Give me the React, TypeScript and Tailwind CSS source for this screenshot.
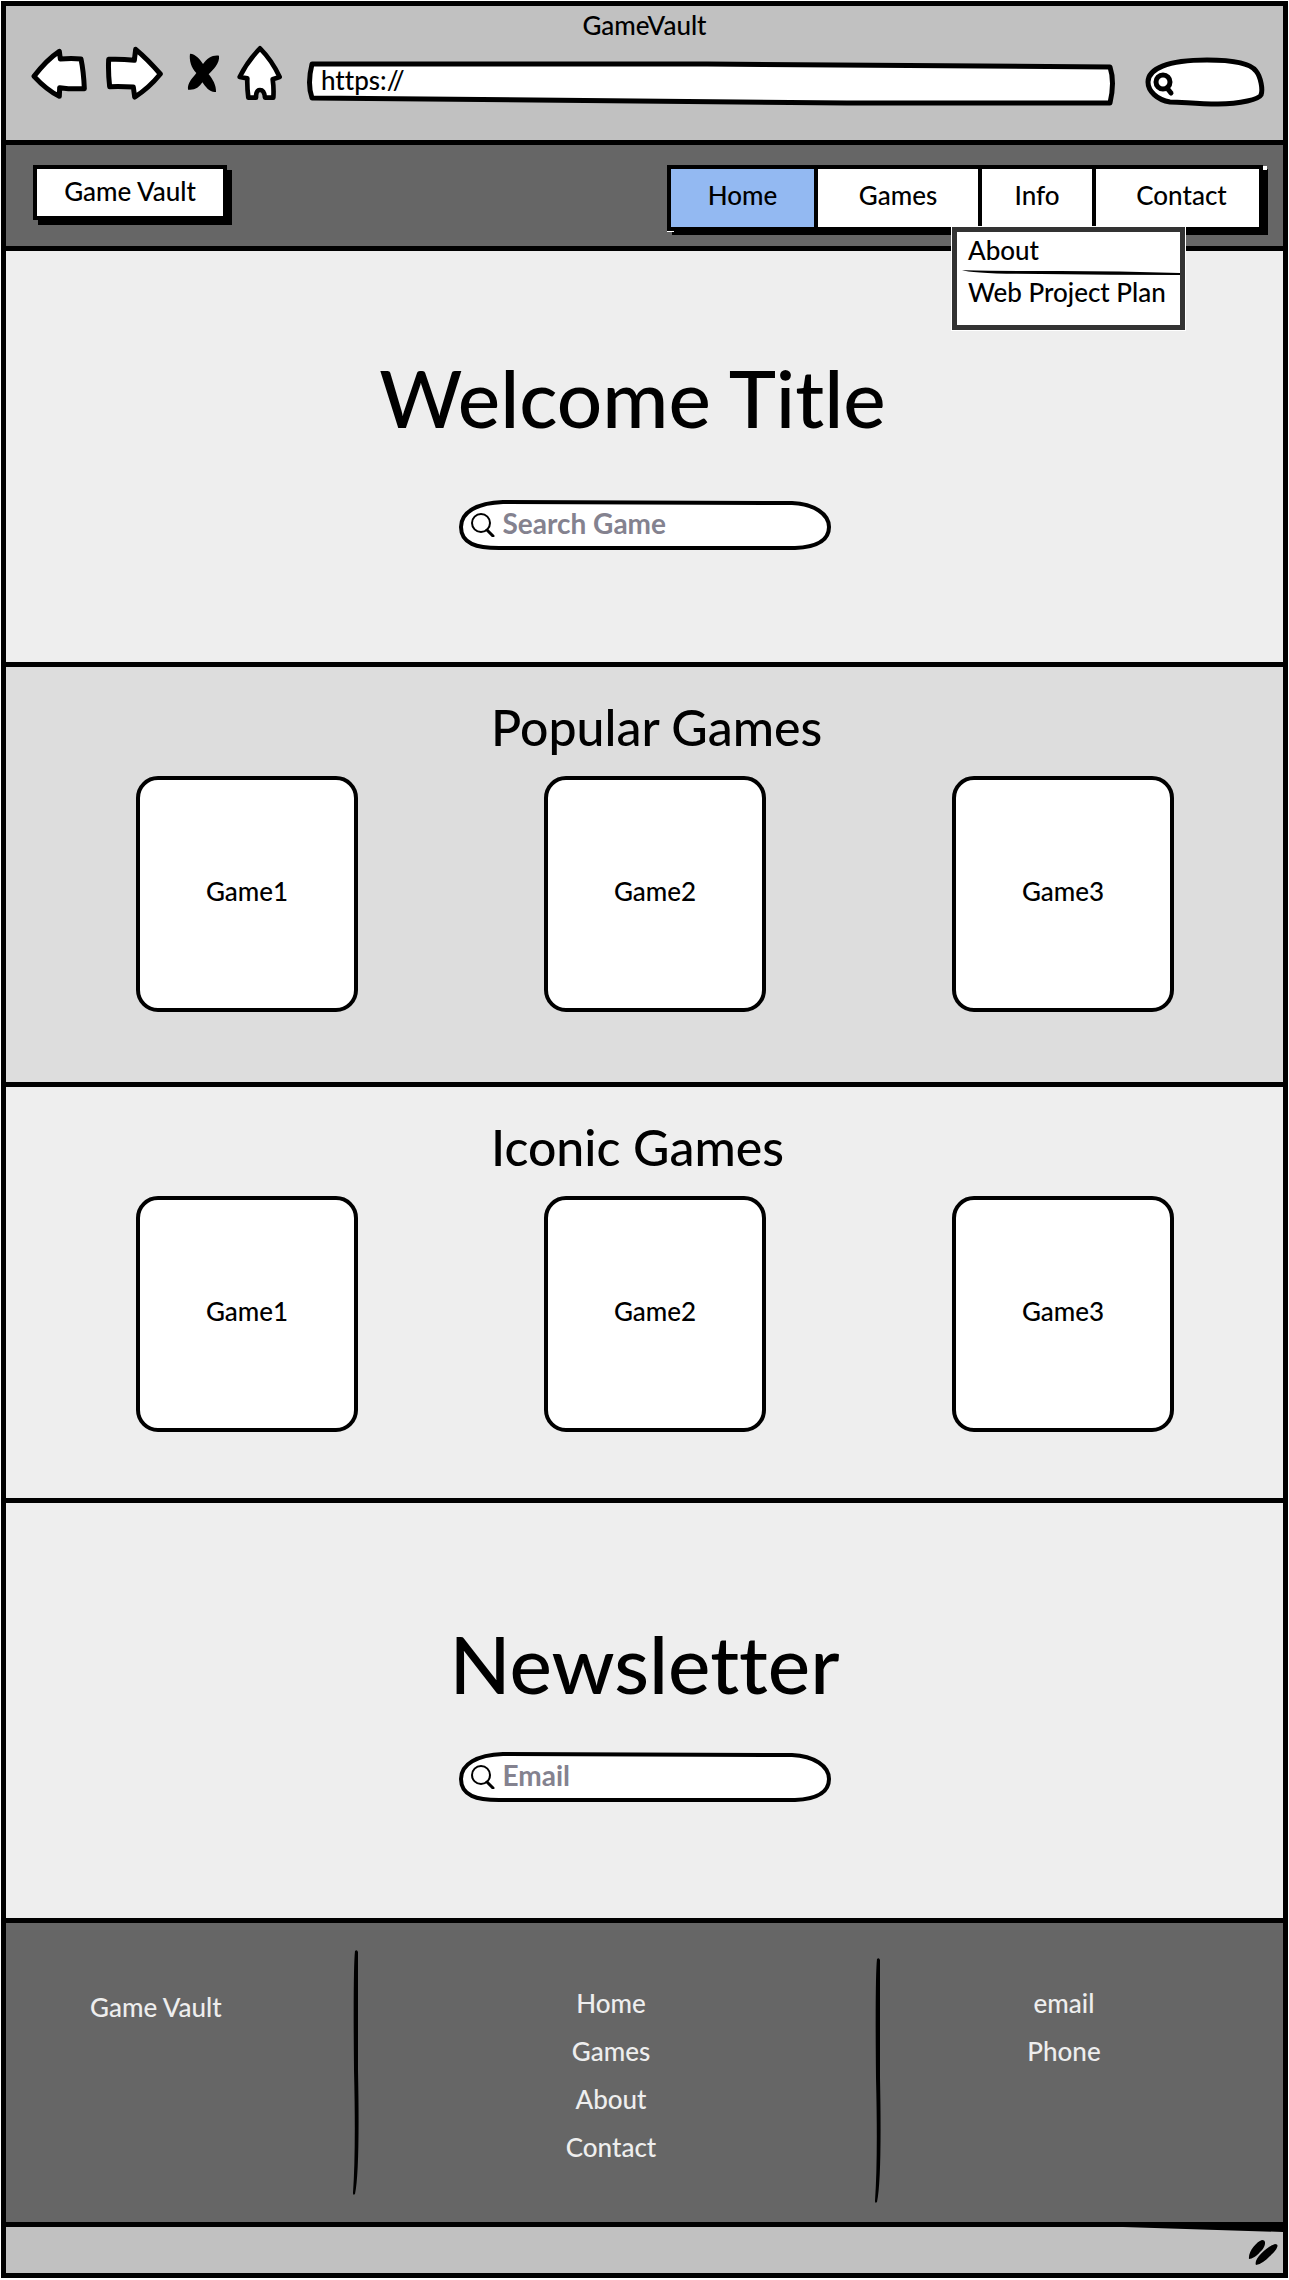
import React from "react";

const ink = {
  stroke: "#000",
  strokeLinecap: "round" as const,
  strokeLinejoin: "round" as const,
};

function BackIcon() {
  return (
    <svg viewBox="93 138 171 159" className="h-[53px] w-[57px]" aria-hidden="true">
      <path d="M102 226 Q140 176 178 151 L181 174 Q215 171 243 174 Q251 212 253 263 Q215 265 179 260 L178 286 Q140 267 102 226Z" fill="#fff" strokeWidth="15" {...ink} />
    </svg>
  );
}

function ForwardIcon() {
  return (
    <svg viewBox="315 141 177 162" className="h-[54px] w-[59px]" aria-hidden="true">
      <path d="M326 181 Q360 179 403 184 L407 151 Q442 180 481 225 Q445 269 404 294 L400 264 Q366 262 329 263 Q324 220 326 181Z" fill="#fff" strokeWidth="15" {...ink} />
    </svg>
  );
}

function StopIcon() {
  return (
    <svg viewBox="561 153 102 120" className="h-[40px] w-[34px]" aria-hidden="true">
      <path d="M570 155 C587 156 600 172 609 186 C621 169 638 158 657 161 C660 184 639 203 626 217 C638 231 649 250 648 270 C630 273 616 254 607 241 C598 256 583 266 564 263 C561 242 580 226 589 213 C574 197 567 175 570 155Z" fill="#000" />
    </svg>
  );
}

function HomeIcon() {
  return (
    <svg viewBox="711 135 138 168" className="h-[56px] w-[46px]" aria-hidden="true">
      <path d="M780 145 Q816 181 839 231 L818 238 Q822 265 820 293 L795 293 Q793 270 780 270 Q768 270 768 293 L745 293 Q741 262 742 235 L719 231 Q742 184 780 145Z" fill="#fff" strokeWidth="14" {...ink} />
    </svg>
  );
}

function ResizeGrip() {
  return (
    <svg viewBox="0 0 30 27" className="h-[27px] w-[30px]" aria-hidden="true">
      <path d="M1 20 C0 13 8 3 14 1 C20 1 16 10 12 13 C9 17 4 20 1 20Z M8 26 C5 20 20 7 27 5 C33 5 27 13 22 17 C17 22 13 25 8 26Z" fill="#000" />
    </svg>
  );
}

function PillField({ label, type }: { label: string; type: string }) {
  return (
    <label className="relative flex h-[50px] w-[372px] items-center pb-px pl-3">
      <svg viewBox="0 0 372 50" preserveAspectRatio="none" className="absolute inset-0 h-full w-full" aria-hidden="true">
        <path d="M2 27 C2 12 18 3 44 2 L333 3 C355 4 370 14 370 27 C370 40 358 47 336 48 L40 48 C18 48 2 44 2 27Z" fill="#fff" strokeWidth="4" {...ink} />
      </svg>
      <svg viewBox="0 0 24 24" className="relative h-6 w-6 shrink-0" fill="none" aria-hidden="true">
        <circle cx="10" cy="10" r="9" strokeWidth="2" {...ink} />
        <path d="M16 17 L22 23" strokeWidth="3" {...ink} />
      </svg>
      <input
        type={type}
        aria-label={label}
        placeholder={label}
        className="relative mr-4 ml-2 h-9 min-w-0 flex-1 bg-transparent pb-1 text-[28px] leading-8 font-bold outline-none placeholder:text-[#84828f] placeholder:opacity-100"
      />
    </label>
  );
}

function GameSection({ title, tone }: { title: string; tone: string }) {
  return (
    <section className={`border-b-[5px] border-black pt-8 pr-[109px] pl-[130px] ${tone}`}>
      <h2 className="mx-auto w-[328px] text-[50px] leading-[56px] whitespace-nowrap">{title}</h2>
      <div className="mt-[21px] flex justify-between">
        {["Game1", "Game2", "Game3"].map((game) => (
          <a key={game} href="#" className="flex h-[236px] w-[222px] items-center justify-center rounded-[22px] border-4 border-black bg-white pb-[6px]">
            {game}
          </a>
        ))}
      </div>
    </section>
  );
}

function FooterRule({ drop }: { drop: string }) {
  return (
    <svg viewBox="0 0 6 245" className={`h-[245px] w-[6px] shrink-0 ${drop}`} aria-hidden="true">
      <path d="M2 1 Q4 -1 5 2 Q5 60 5 120 Q7 220 2 244 Q0 246 0 243 Q3 200 1 120 Q0 20 2 1Z" fill="#000" />
    </svg>
  );
}

const cell = "flex h-[58px] items-center justify-center pb-[6px]";

export default function App() {
  return (
    <div className="bg-white p-px font-['Lato',sans-serif] text-[26px] leading-8 font-medium text-black [font-variant-ligatures:none]">
      <div className="border-[5px] border-black">
        <header className="border-b-[5px] border-black bg-[#c1c1c1] pt-[3px] pb-[33px]">
          <div className="text-center">GameVault</div>
          <div className="mt-1 flex items-start pr-[18px] pl-[25px]">
            <div className="flex h-[56px] items-center">
              <button type="button" aria-label="Back"><BackIcon /></button>
              <button type="button" aria-label="Forward" className="ml-[17px]"><ForwardIcon /></button>
              <button type="button" aria-label="Stop" className="ml-[23px]"><StopIcon /></button>
              <button type="button" aria-label="Home page" className="ml-4"><HomeIcon /></button>
            </div>
            <div className="relative mt-[15px] ml-6 h-[46px] flex-1">
              <svg viewBox="0 0 808 46" preserveAspectRatio="none" className="absolute inset-0 h-full w-full" aria-hidden="true">
                <path d="M5 4 L400 4 L803 7 Q808 22 803 43 L540 43 L5 38 Q0 24 5 4Z" fill="#fff" strokeWidth="5" {...ink} />
              </svg>
              <input aria-label="Address" defaultValue="https://" className="relative h-10 w-full bg-transparent px-[14px] outline-none" />
            </div>
            <label className="relative mt-3 ml-[30px] flex h-[50px] w-[120px] items-center">
              <svg viewBox="0 0 120 50" className="absolute inset-0 h-full w-full" aria-hidden="true">
                <path d="M3 25 C3 12 22 3 62 3 C92 3 106 7 111 14 C116 20 118 33 116 38 C114 42 96 47 73 47 C50 47 38 45 25 45 C12 43 3 34 3 25Z" fill="#fff" strokeWidth="5" {...ink} />
                <circle cx="18" cy="25" r="7" fill="none" strokeWidth="5" {...ink} />
                <path d="M22 31 L26 36" strokeWidth="5" {...ink} />
              </svg>
              <input type="search" aria-label="Search the web" className="relative mr-3 ml-8 w-full min-w-0 bg-transparent outline-none" />
            </label>
          </div>
        </header>

        <div className="flex items-start justify-between border-b-[5px] border-black bg-[#666] pt-5 pr-5 pb-[15px] pl-[27px]">
          <a href="#" className="flex h-[55px] w-[194px] items-center justify-center border-4 border-black bg-white pb-1 shadow-[5px_5px_0_0_#000]">
            Game Vault
          </a>
          <nav className="relative flex border-4 border-black bg-white shadow-[5px_4px_0_0_#000]">
            <span className="absolute -top-[3px] -right-[8px] h-1 w-1 bg-white" />
            <span className="absolute -bottom-[5px] -left-[4px] h-px w-[7px] bg-white" />
            <a href="#" className={`w-[143px] bg-[#93b9f2] ${cell}`}>Home</a>
            <a href="#" className={`w-[164px] border-l-4 border-black ${cell}`}>Games</a>
            <div className="relative">
              <button type="button" aria-expanded="true" className={`w-[114px] border-l-4 border-black ${cell}`}>Info</button>
              <div className="absolute top-full -left-[26px] z-10 h-[103px] w-[233px] border-[5px] border-[#333] bg-white pt-[2px] shadow-[0_0_0_1px_#fff]">
                <a href="#" className="block pl-[11px]">About</a>
                <svg viewBox="0 0 222 6" preserveAspectRatio="none" className="mt-1 ml-[5px] h-[6px] w-[218px]" aria-hidden="true">
                  <path d="M0 0 Q20 1 100 1 Q160 1 222 3 L222 5 Q150 5 80 4 Q10 4 0 0Z" fill="#000" />
                </svg>
                <a href="#" className="block pl-[11px] whitespace-nowrap">Web Project Plan</a>
              </div>
            </div>
            <a href="#" className={`w-[167px] border-l-4 border-black pl-2 ${cell}`}>Contact</a>
          </nav>
        </div>

        <section className="flex flex-col items-center border-b-[5px] border-black bg-[#eee] pt-[98px] pb-[112px]">
          <h1 className="mr-6 text-[80px] leading-[96px]">Welcome Title</h1>
          <div className="mt-[55px]"><PillField label="Search Game" type="search" /></div>
        </section>

        <GameSection title="Popular Games" tone="bg-[#ddd] pb-[70px]" />
        <GameSection title="Iconic Games" tone="bg-[#eee] pb-[66px]" />

        <section className="flex flex-col items-center border-b-[5px] border-black bg-[#eee] pt-[112px] pb-[116px]">
          <h2 className="text-[80px] leading-[96px]">Newsletter</h2>
          <div className="mt-[41px]"><PillField label="Email" type="email" /></div>
        </section>

        <footer className="flex items-start border-b-[5px] border-black bg-[#666] pb-[19px] text-[#eee]">
          <div className="w-[347px] pt-[68px] pl-[84px]">Game Vault</div>
          <FooterRule drop="mt-[27px]" />
          <nav className="flex flex-1 flex-col items-center gap-4 pt-16 pr-3">
            <a href="#">Home</a>
            <a href="#">Games</a>
            <a href="#">About</a>
            <a href="#">Contact</a>
          </nav>
          <FooterRule drop="mt-[35px]" />
          <div className="flex w-[402px] flex-col items-center gap-4 pt-16 pr-9">
            <a href="#">email</a>
            <a href="#">Phone</a>
          </div>
        </footer>

        <div className="relative flex h-[46px] items-center justify-end bg-[#c1c1c1] pt-1 pr-[5px]">
          <svg viewBox="0 0 160 5" className="absolute top-0 right-0 h-[5px] w-[160px]" aria-hidden="true">
            <path d="M0 0 L160 0 L160 5Z" fill="#000" />
          </svg>
          <ResizeGrip />
        </div>
      </div>
    </div>
  );
}
